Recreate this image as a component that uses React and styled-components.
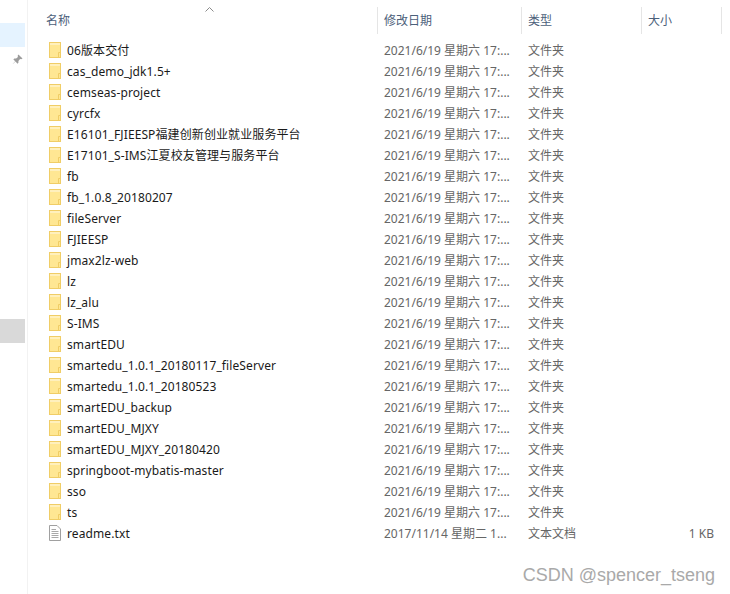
import styled, { createGlobalStyle } from 'styled-components'

const GlobalStyle = createGlobalStyle`
  html, body {
    margin: 0;
    padding: 0;
    background: #fff;
  }
  body {
    font-family: "Noto Sans", "Noto Sans CJK SC", sans-serif;
    font-size: 12px;
  }
`

const Window = styled.div`
  display: flex;
  width: 730px;
  height: 594px;
  overflow: hidden;
  background: #fff;
`

const Sidebar = styled.div`
  width: 25px;
  padding-top: 23px;
  margin-right: 2px;
  display: flex;
  flex-direction: column;
  align-items: stretch;
  flex-shrink: 0;
`

const SideBlock = styled.div`
  height: 24px;
  background: ${p => p.$color};
`

const PinBox = styled.div`
  height: 24px;
  display: flex;
  align-items: center;
  justify-content: flex-end;
  padding-right: 2px;
  margin-bottom: 248px;
`

const Main = styled.div`
  flex: 1;
  border-left: 1px solid #f2f2f2;
  position: relative;
`

const Caret = styled.svg`
  position: absolute;
  left: 177px;
  top: 7px;
`

const Header = styled.div`
  display: grid;
  grid-template-columns: 350px 144px 120px 80px;
  margin-top: 7px;
  height: 27px;
`

const HeaderCell = styled.div`
  color: #4c607a;
  line-height: 27px;
  padding-left: ${p => p.$pad}px;
  border-right: 1px solid #e5e5e5;
`

const Rows = styled.div`
  padding-top: 6px;
`

const Row = styled.div`
  display: grid;
  grid-template-columns: 350px 144px 120px 80px;
  height: 21px;
  box-sizing: border-box;
  padding-bottom: 1px;
  align-items: center;
`

const NameCell = styled.div`
  display: flex;
  align-items: center;
  gap: 6px;
  padding-left: 21px;
  color: #1a1a1a;
  letter-spacing: 0.1px;
  white-space: nowrap;
`

const MutedCell = styled.div`
  color: #666;
  padding-left: 6px;
  white-space: nowrap;
`

const SizeCell = styled.div`
  color: #666;
  text-align: right;
  padding-right: 8px;
`

const Watermark = styled.div`
  position: absolute;
  right: 15px;
  top: 565px;
  font-family: "Liberation Sans", sans-serif;
  font-size: 18px;
  line-height: 21px;
  color: #a9a9a9;
`

const FolderIcon = () => (
  <svg width="12" height="16" viewBox="0 0 12 16">
    <rect x="0.5" y="0.5" width="11" height="15" fill="#ffe793" stroke="#f0cd66" />
    <rect x="1" y="1" width="10" height="2" fill="#fff0bd" />
    <path d="M9.5 15.5V10.5H11.5" fill="none" stroke="#f0cd66" />
  </svg>
)

const TextIcon = () => (
  <svg width="12" height="16" viewBox="0 0 12 16">
    <path d="M0.5 0.5H8L11.5 4V15.5H0.5Z" fill="#fff" stroke="#a0a0a0" />
    <path d="M2.5 4.5H7M2.5 6.5H9.5M2.5 8.5H9.5M2.5 10.5H9.5M2.5 12.5H9.5" stroke="#a8a8a8" />
  </svg>
)

const PinIcon = () => (
  <svg width="11" height="11" viewBox="0 0 12 12">
    <path d="M7 0.5L11.5 5L10 5.8L8.8 5.5L7 7.5L7 9.5L6 10.5L3.8 8.2L1 11L0.8 10.8L3.5 8L1.5 6L2.5 5L4.5 5L6.5 3.2L6.2 2Z" fill="#9c9c9c" />
  </svg>
)

const folders = [
  '06版本交付',
  'cas_demo_jdk1.5+',
  'cemseas-project',
  'cyrcfx',
  'E16101_FJIEESP福建创新创业就业服务平台',
  'E17101_S-IMS江夏校友管理与服务平台',
  'fb',
  'fb_1.0.8_20180207',
  'fileServer',
  'FJIEESP',
  'jmax2lz-web',
  'lz',
  'lz_alu',
  'S-IMS',
  'smartEDU',
  'smartedu_1.0.1_20180117_fileServer',
  'smartedu_1.0.1_20180523',
  'smartEDU_backup',
  'smartEDU_MJXY',
  'smartEDU_MJXY_20180420',
  'springboot-mybatis-master',
  'sso',
  'ts',
]

export default function App() {
  return (
    <Window>
      <GlobalStyle />
      <Sidebar>
        <SideBlock $color="#e5f3ff" />
        <PinBox><PinIcon /></PinBox>
        <SideBlock $color="#d9d9d9" />
      </Sidebar>
      <Main>
        <Caret width="9" height="5" viewBox="0 0 9 5">
          <path d="M0.5 4.5L4.5 0.5L8.5 4.5" fill="none" stroke="#8a8a8a" />
        </Caret>
        <Header>
          <HeaderCell $pad={18}>名称</HeaderCell>
          <HeaderCell $pad={6}>修改日期</HeaderCell>
          <HeaderCell $pad={6}>类型</HeaderCell>
          <HeaderCell $pad={6}>大小</HeaderCell>
        </Header>
        <Rows>
          {folders.map(name => (
            <Row key={name}>
              <NameCell><FolderIcon />{name}</NameCell>
              <MutedCell>2021/6/19 星期六 17:...</MutedCell>
              <MutedCell>文件夹</MutedCell>
            </Row>
          ))}
          <Row>
            <NameCell><TextIcon />readme.txt</NameCell>
            <MutedCell>2017/11/14 星期二 1...</MutedCell>
            <MutedCell>文本文档</MutedCell>
            <SizeCell>1 KB</SizeCell>
          </Row>
        </Rows>
        <Watermark>CSDN @spencer_tseng</Watermark>
      </Main>
    </Window>
  )
}
